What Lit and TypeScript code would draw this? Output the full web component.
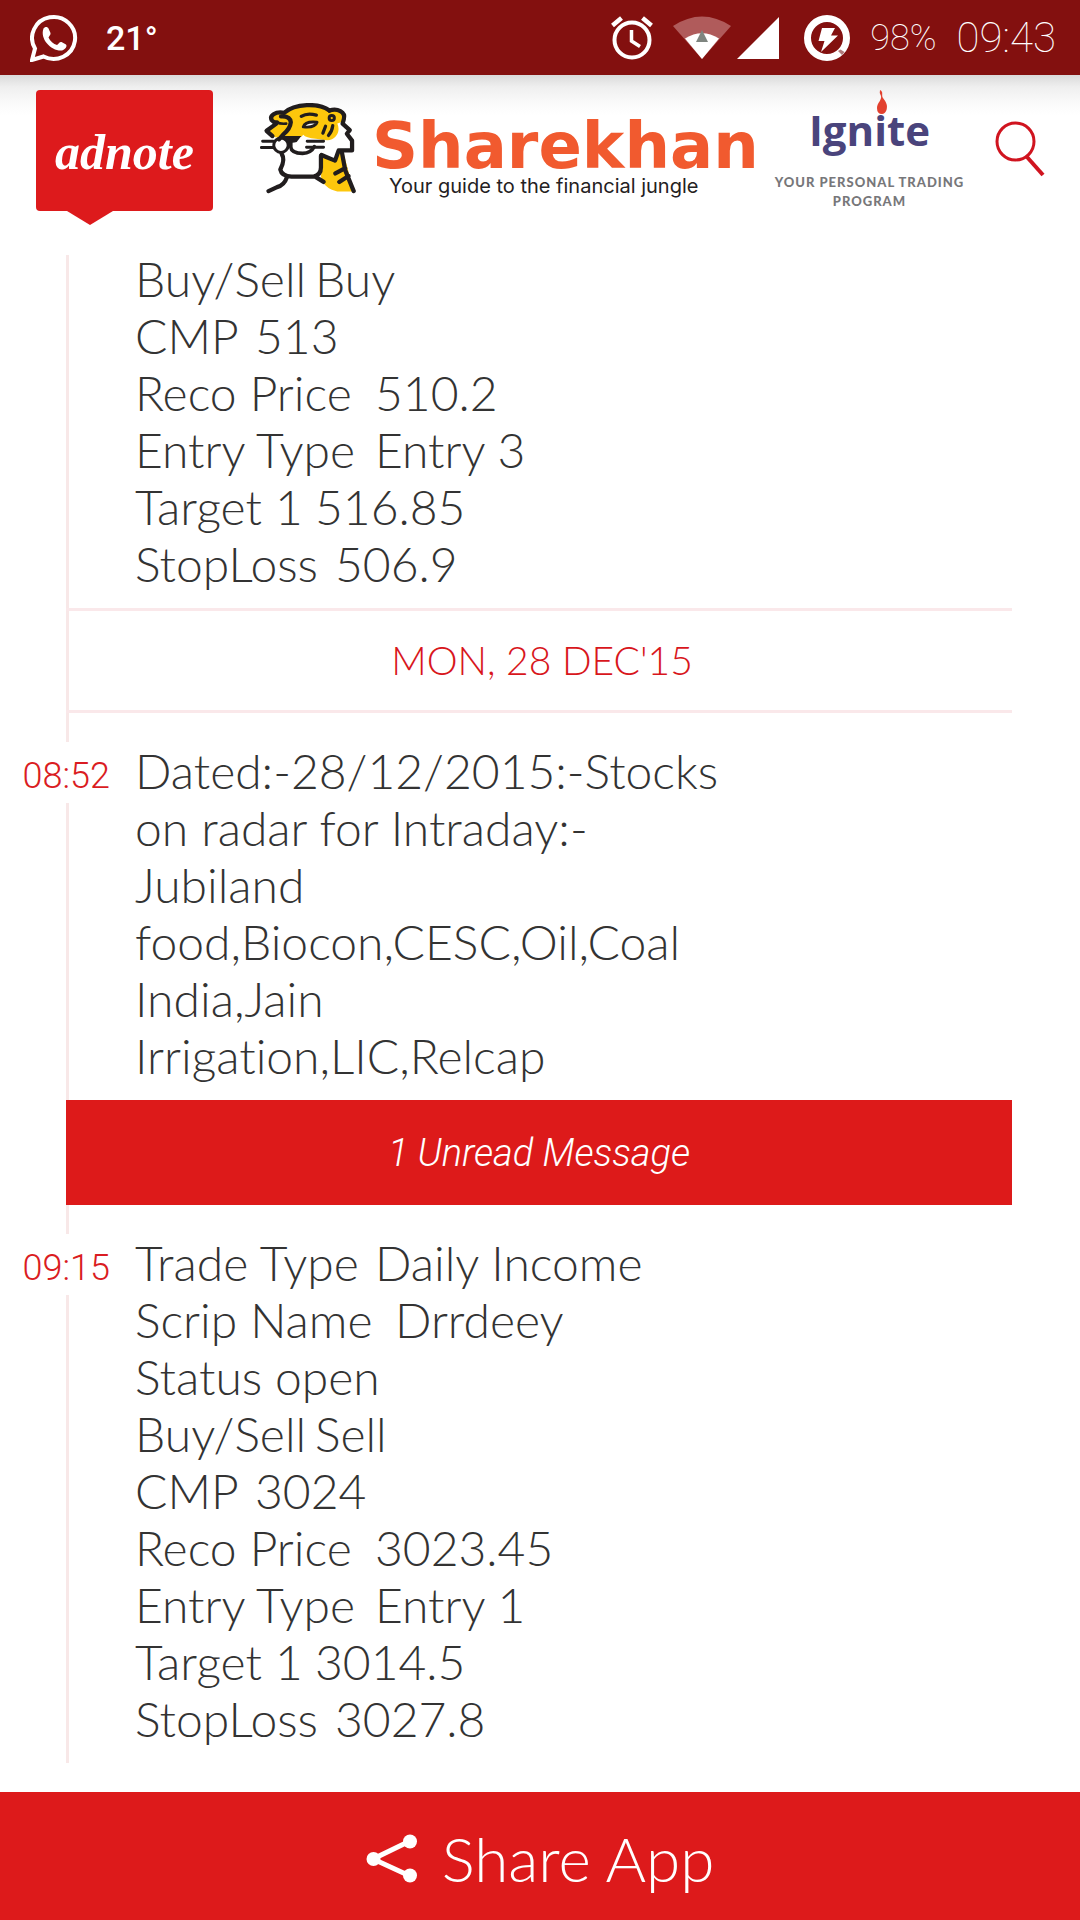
import { LitElement, html, css, svg } from "lit";
import { customElement, property } from "lit/decorators.js";

interface Message {
  time?: string;
  lines: string[];
}

const earlier: Message = {
  lines: [
    "Buy/Sell\tBuy",
    "CMP\t513",
    "Reco Price\t510.2",
    "Entry Type\tEntry 3",
    "Target 1\t516.85",
    "StopLoss\t506.9",
  ],
};

const radar: Message = {
  time: "08:52",
  lines: [
    "Dated:-28/12/2015:-Stocks",
    "on radar for Intraday:-",
    "Jubiland",
    "food,Biocon,CESC,Oil,Coal",
    "India,Jain",
    "Irrigation,LIC,Relcap",
  ],
};

const unread: Message = {
  time: "09:15",
  lines: [
    "Trade Type\tDaily Income",
    "Scrip Name\tDrrdeey",
    "Status\topen",
    "Buy/Sell\tSell",
    "CMP\t3024",
    "Reco Price\t3023.45",
    "Entry Type\tEntry 1",
    "Target 1\t3014.5",
    "StopLoss\t3027.8",
  ],
};

const whatsappIcon = svg`
  <svg class="icon-whatsapp" viewBox="0 0 48 48" aria-hidden="true">
    <path d="M5 34.5A21.5 21 0 1 1 13.5 42.5L2 46Z" fill="none" stroke="#fff" stroke-width="4" stroke-linejoin="miter"/>
    <path d="M13.5 14.5c1.500-2 4-2 5 0l2 4.500c.5 1.500-1.500 3-2 4.500 1.500 3.500 5 6.500 8.500 7.500 1.500-1 2.500-3.500 4.500-3l4.500 2.500c1.500 1.500-.5 5-4 6C21.500 37.500 9.500 25 13.500 14.500Z" fill="#fff"/>
  </svg>`;

const alarmIcon = svg`
  <svg class="icon-alarm" viewBox="0 0 42 44" aria-hidden="true">
    <g fill="none" stroke="#fff">
      <circle cx="21" cy="24" r="17.500" stroke-width="4"/>
      <path d="M1.500 9.500 10.500 2M40.500 9.500 31.500 2" stroke-width="4.500"/>
      <path d="M20.500 14v11l8.500 5.500" stroke-width="3.500"/>
    </g>
  </svg>`;

const wifiIcon = svg`
  <svg class="icon-wifi" viewBox="0 0 58 43" aria-hidden="true">
    <path d="M0 10Q29-9 58 10L29 43Z" fill="#b05b5b"/>
    <path d="M12 22.500Q29 12 46 22.500L29 43Z" fill="#fff"/>
    <path d="M29 14 35 26H23Z" fill="#7f8580"/>
  </svg>`;

const signalIcon = svg`
  <svg class="icon-signal" viewBox="0 0 42 42" aria-hidden="true">
    <path d="M42 0V42H0Z" fill="#fff"/>
  </svg>`;

const batteryIcon = svg`
  <svg class="icon-battery" viewBox="0 0 46 46" aria-hidden="true">
    <circle cx="23" cy="23" r="19.500" fill="none" stroke="#fff" stroke-width="7"/>
    <path d="m34 36 4 4 2.500-3-4-2.500Z" fill="#b07a7a"/>
    <path d="M18 13h13l-4 7.500h7L17 37l3.500-11h-6Z" fill="#fff"/>
  </svg>`;

const tigerIcon = svg`
  <svg class="tiger" viewBox="26 36 293 276" aria-hidden="true">
    <path d="M62 82C66 66 84 62 100 64C130 38 205 34 234 60C254 48 286 56 284 82C280 92 272 96 262 98C272 120 262 146 230 150L196 154L160 138L92 142L72 140L46 120L74 98Z" fill="#fdc70c"/>
    <path d="M262 186 280 184 312 305H262C236 300 214 282 212 258L218 200 254 212Z" fill="#fdc70c"/>
    <path d="M158 132Q166 142 196 144L240 150 212 176 184 188Q150 194 130 178L140 152Z" fill="#fff"/>
    <circle cx="90" cy="164" r="19" fill="#fff"/>
    <g fill="none" stroke="#211d1e" stroke-width="13" stroke-linecap="round" stroke-linejoin="round">
      <path d="M100 65C72 60 54 74 62 88Q68 96 78 94M100 65C132 36 206 34 238 58"/>
      <path d="M90 76Q118 74 120 94Q118 114 98 130L84 146"/>
      <path d="M238 58C262 50 288 62 282 84Q280 92 278 98L300 118 291 129 307 150V180L266 180 255 211 228 200 214 194"/>
      <path d="M76 98 46 120 64 136"/>
      <path d="M76 94Q90 100 106 98" stroke-width="8"/>
      <path d="M152 76Q170 64 198 72" stroke-width="10"/>
      <path d="M158 108Q164 90 200 94Q194 112 158 108Z" fill="#fff" stroke-width="9"/>
      <circle cx="245" cy="81" r="8" stroke-width="9"/>
      <path d="M226 106 218 127M248 104Q246 122 235 134" stroke-width="10"/>
      <circle cx="90" cy="164" r="22" stroke-width="9"/>
      <path d="M120 150V170Q122 188 156 189Q182 188 192 168" stroke-width="11"/>
      <path d="M34 152H66M30 171H66M170 152H220M168 170H220" stroke-width="9"/>
      <path d="M92 190Q104 208 88 238Q92 258 122 260H190Q212 254 212 232V196"/>
      <path d="M108 262Q100 286 78 292L52 304M198 262 220 276M276 186 286 240 312 304M286 234 256 250M296 258 268 276"/>
    </g>
    <path d="M92 136H152L138 154Q120 160 104 150Z" fill="#211d1e"/>
  </svg>`;

const flameIcon = svg`
  <svg class="flame" viewBox="0 0 12 24" aria-hidden="true">
    <path d="M4 0C8 2 5 5 7 8C10 12 12 15 10.500 20Q9 24 6 24Q1 24 1 18C1 13 6 10 5 6Q3 3 4 0Z" fill="#e2412f"/>
  </svg>`;

const searchIcon = svg`
  <svg class="icon-search" viewBox="0 0 50 56" aria-hidden="true">
    <g fill="none" stroke="#d0141f">
      <circle cx="20.500" cy="20.500" r="18.500" stroke-width="3"/>
      <path d="M32 36 48 54" stroke-width="4"/>
    </g>
  </svg>`;

const shareIcon = svg`
  <svg class="icon-share" viewBox="0 0 52 49" aria-hidden="true">
    <path d="M44 7 7 25 44 42" fill="none" stroke="#fff" stroke-width="5"/>
    <g fill="#fff"><circle cx="44" cy="7.500" r="7"/><circle cx="7.500" cy="25" r="7"/><circle cx="44" cy="41.500" r="7"/></g>
  </svg>`;

@customElement("status-bar")
export class StatusBar extends LitElement {
  static styles = css`
    :host {
      display: flex;
      align-items: center;
      height: 75px;
      padding: 0 24px 0 30px;
      box-sizing: border-box;
      background: #83100f;
      color: #fff;
      font-family: Roboto, sans-serif;
      line-height: 48px;
    }
    svg { display: block; flex: none; }
    .group { display: flex; align-items: center; }
    .right { margin-left: auto; }
    .icon-whatsapp { width: 48px; height: 48px; }
    .temp { margin-left: 28px; font-size: 34px; font-weight: 500; }
    .icon-alarm { width: 42px; height: 44px; }
    .icon-wifi { width: 58px; height: 43px; margin-left: 20px; }
    .icon-signal { width: 42px; height: 42px; margin-left: 6px; }
    .icon-battery { width: 46px; height: 46px; margin-left: 25px; }
    .percent { margin-left: 20px; font-size: 36px; font-weight: 100; }
    .clock { margin-left: 20px; font-size: 42px; font-weight: 100; }
  `;
  render() {
    return html`
      <div class="group">${whatsappIcon}<span class="temp">21°</span></div>
      <div class="group right">
        ${alarmIcon}${wifiIcon}${signalIcon}${batteryIcon}
        <span class="percent">98%</span><span class="clock">09:43</span>
      </div>
    `;
  }
}

@customElement("brand-header")
export class BrandHeader extends LitElement {
  static styles = css`
    :host {
      display: flex;
      align-items: flex-start;
      height: 146px;
      padding: 15px 35px 0 36px;
      box-sizing: border-box;
      background: linear-gradient(#dadada, #efefef 12px, #fafafa 28px, #fff 40px);
    }
    svg { display: block; }
    .adnote {
      flex: none;
      width: 177px;
      height: 121px;
      box-sizing: border-box;
      padding-top: 32px;
      border-radius: 4px;
      background: #dd1a1c;
      color: #fff;
      text-align: center;
      text-decoration: none;
      font: italic bold 50px/60px "Liberation Serif", serif;
    }
    .adnote::after {
      content: "";
      display: block;
      width: 46px;
      height: 14px;
      margin: 29px 0 0 31px;
      background: #dd1a1c;
      clip-path: polygon(0 0, 100% 0, 50% 100%);
    }
    .sharekhan { display: flex; margin: 13px 0 0 47px; }
    .tiger { width: 96px; height: 91px; flex: none; }
    .words { margin-left: 16px; white-space: nowrap; }
    .name { margin-top: 12px; color: #f15a2f; font: bold 64px/62px "DejaVu Sans", sans-serif; }
    .tag { padding-left: 17px; color: #242122; font: 20px/18px Inter, sans-serif; }
    .ignite { margin: 0 auto 0 16px; text-align: center; }
    .mark {
      position: relative;
      display: inline-block;
      margin-top: 12px;
      color: #4a447c;
      font: bold 42px/56px "Open Sans", sans-serif;
    }
    .flame { position: absolute; top: -12px; left: 67px; width: 12px; height: 24px; }
    .program {
      margin-top: 15px;
      color: #77777a;
      font: 900 13px/19px Lato, sans-serif;
      letter-spacing: 1px;
      white-space: nowrap;
    }
    button {
      flex: none;
      margin-top: 31px;
      padding: 0;
      border: 0;
      background: none;
    }
    .icon-search { width: 50px; height: 56px; }
  `;
  render() {
    return html`
      <a class="adnote" href="#home">adnote</a>
      <div class="sharekhan">
        ${tigerIcon}
        <div class="words">
          <div class="name">Sharekhan</div>
          <div class="tag">Your guide to the financial jungle</div>
        </div>
      </div>
      <div class="ignite">
        <div class="mark">Ignite${flameIcon}</div>
        <div class="program">YOUR PERSONAL TRADING<br />PROGRAM</div>
      </div>
      <button type="button" aria-label="Search">${searchIcon}</button>
    `;
  }
}

@customElement("feed-message")
export class FeedMessage extends LitElement {
  @property({ attribute: false }) message!: Message;

  static styles = css`
    :host {
      display: grid;
      grid-template-columns: 110px 1fr;
      column-gap: 25px;
      align-items: start;
      padding: 29px 0 16px;
    }
    .time {
      padding-top: 8px;
      background: #fff;
      color: #da1c22;
      text-align: right;
      font: 300 36px/53px Roboto, sans-serif;
    }
    .body {
      grid-column: 2;
      margin: 0;
      color: #333;
      font: 300 48px/57px Lato, sans-serif;
      font-variant-ligatures: none;
      white-space: pre;
      tab-size: 20px;
    }
  `;
  render() {
    const { time, lines } = this.message;
    return html`
      ${time ? html`<time class="time">${time}</time>` : null}
      <p class="body">${lines.join("\n")}</p>
    `;
  }
}

@customElement("app-root")
export class AppRoot extends LitElement {
  static styles = css`
    :host {
      display: flex;
      flex-direction: column;
      min-height: 100vh;
      background: #fff;
    }
    .feed {
      background: linear-gradient(#f8e8e8, #f8e8e8) 66px 34px / 3px 100% no-repeat;
    }
    .date, .unread {
      height: 105px;
      margin: 0 68px 0 66px;
      box-sizing: border-box;
      text-align: center;
    }
    .date {
      padding-left: 6px;
      border: solid #fae8ea;
      border-width: 3px 0;
      color: #d8161c;
      font: 300 39px/98px Lato, sans-serif;
    }
    .unread {
      background: #dd1a1a;
      color: #fff;
      font: italic 300 38px/107px Roboto, sans-serif;
    }
    .share {
      display: flex;
      align-items: center;
      justify-content: center;
      gap: 24px;
      height: 128px;
      margin-top: auto;
      padding: 4px 0 0;
      border: 0;
      background: #dd1a1b;
      color: #fff;
      font: 300 62px/120px Lato, sans-serif;
    }
    .icon-share { width: 52px; height: 49px; }
  `;
  render() {
    return html`
      <status-bar></status-bar>
      <brand-header></brand-header>
      <main class="feed">
        <feed-message .message=${earlier}></feed-message>
        <div class="date">MON, 28 DEC'15</div>
        <feed-message .message=${radar}></feed-message>
        <div class="unread">1 Unread Message</div>
        <feed-message .message=${unread}></feed-message>
      </main>
      <button class="share" type="button">${shareIcon}<span>Share App</span></button>
    `;
  }
}
